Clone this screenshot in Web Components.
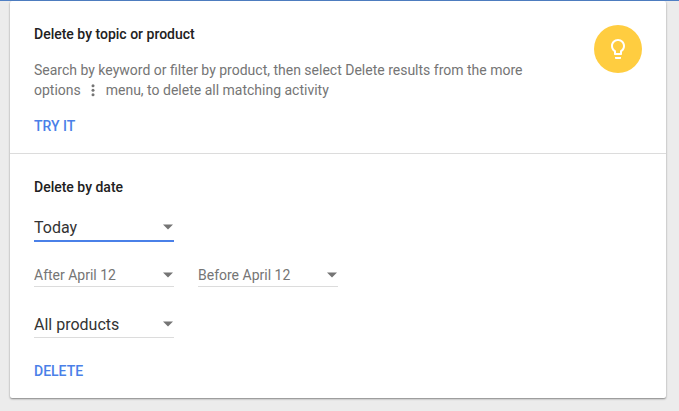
<!DOCTYPE html>
<html lang="en">
<head>
  <meta charset="utf-8">
  <meta name="viewport" content="width=device-width, initial-scale=1">
  <title>Delete activity</title>
  <style>
    body {
      margin: 0;
      background: #ececec;
      color: #212121;
      font: 14px/20px Roboto, sans-serif;
    }
  </style>
</head>
<body>
  <activity-page>
    <activity-section heading="Delete by topic or product">
      <tip-icon slot="icon"></tip-icon>
      <search-hint></search-hint>
      <action-button slot="action">TRY IT</action-button>
    </activity-section>
    <activity-section heading="Delete by date">
      <date-filters></date-filters>
      <action-button slot="action">DELETE</action-button>
    </activity-section>
  </activity-page>

  <script>
    class BaseElement extends HTMLElement {
      constructor() {
        super();
        const shadow = this.attachShadow({ mode: 'open' });
        const template = document.createElement('template');
        template.innerHTML = this.constructor.markup;
        shadow.appendChild(template.content.cloneNode(true));
      }
    }

    class ActivityPage extends BaseElement {
      static markup = `
        <style>
          :host {
            display: block;
            border-top: 1px solid #4f7fc4;
          }
          .card {
            margin: 0 13px 12px 10px;
            background: #fff;
            border-radius: 2px;
            box-shadow: 0 1px 2px rgba(0, 0, 0, .45);
          }
          ::slotted(:not(:first-child)) {
            border-top: 1px solid #dcdcdc;
          }
        </style>
        <main class="card"><slot></slot></main>
      `;
    }

    class ActivitySection extends BaseElement {
      static markup = `
        <style>
          :host {
            display: block;
            padding: 24px 24px 17px;
          }
          .row {
            display: flex;
            align-items: flex-start;
            gap: 24px;
          }
          .text {
            flex: 1;
            min-width: 0;
          }
          h2 {
            margin: 0 0 17px;
            font-size: 14px;
            line-height: 18px;
            font-weight: 500;
          }
          .action {
            margin-top: 16px;
          }
        </style>
        <section>
          <div class="row">
            <div class="text">
              <h2></h2>
              <slot></slot>
              <div class="action"><slot name="action"></slot></div>
            </div>
            <slot name="icon"></slot>
          </div>
        </section>
      `;

      connectedCallback() {
        this.shadowRoot.querySelector('h2').textContent = this.getAttribute('heading');
      }
    }

    class TipIcon extends BaseElement {
      static markup = `
        <style>
          :host {
            display: flex;
            align-items: center;
            justify-content: center;
            width: 48px;
            height: 48px;
            border-radius: 50%;
            background: #ffcd40;
          }
          svg {
            width: 24px;
            height: 24px;
            fill: #fff;
          }
        </style>
        <svg viewBox="0 0 24 24" aria-hidden="true">
          <path d="M9 21c0 .55.45 1 1 1h4c.55 0 1-.45 1-1v-1H9v1zm3-19C8.140 2 5 5.140 5 9c0 2.380 1.190 4.470 3 5.740V17c0 .55.45 1 1 1h6c.55 0 1-.45 1-1v-2.260c1.810-1.270 3-3.360 3-5.740 0-3.860-3.140-7-7-7zm2.850 11.100l-.85.6V16h-4v-2.300l-.85-.6C7.800 12.160 7 10.630 7 9c0-2.760 2.240-5 5-5s5 2.240 5 5c0 1.630-.8 3.160-2.150 4.100z"/>
        </svg>
      `;
    }

    class SearchHint extends BaseElement {
      static markup = `
        <style>
          :host {
            display: block;
            color: #757575;
          }
          p {
            margin: 0;
          }
          svg {
            width: 18px;
            height: 18px;
            vertical-align: middle;
            margin: -4px 0;
            fill: currentColor;
          }
        </style>
        <p>Search by keyword or filter by product, then select Delete results from the more <span>options <svg viewBox="0 0 24 24" aria-hidden="true"><circle cx="12" cy="5" r="2"/><circle cx="12" cy="11" r="2"/><circle cx="12" cy="17" r="2"/></svg> menu, to delete all matching activity</span></p>
      `;
    }

    class ActionButton extends BaseElement {
      static markup = `
        <style>
          :host {
            display: block;
          }
          button {
            display: block;
            padding: 0;
            border: 0;
            background: none;
            color: #4a80e8;
            font: 500 14px/20px Roboto, sans-serif;
            cursor: pointer;
          }
        </style>
        <button type="button"><slot></slot></button>
      `;
    }

    class SelectField extends BaseElement {
      static markup = `
        <style>
          :host {
            display: block;
            width: 140px;
            color: #757575;
            font-size: 14px;
          }
          :host([large]) {
            color: #333;
            font-size: 16px;
          }
          label {
            display: grid;
            align-items: center;
            border-bottom: 1px solid #dcdcdc;
          }
          :host([active]) label {
            border-bottom: 2px solid #4a80e8;
          }
          select, svg {
            grid-area: 1 / 1;
          }
          select {
            appearance: none;
            width: 100%;
            height: 22px;
            padding: 0 16px 0 0;
            border: 0;
            outline: 0;
            background: none;
            color: inherit;
            font: inherit;
          }
          :host([large]) select {
            height: 24px;
          }
          svg {
            justify-self: end;
            width: 12px;
            height: 6px;
            fill: #757575;
            pointer-events: none;
          }
          :host([large]) svg {
            margin-bottom: 2px;
          }
        </style>
        <label>
          <select><option></option></select>
          <svg viewBox="0 0 12 6" aria-hidden="true"><path d="M1 .5h10L6 5.500z"/></svg>
        </label>
      `;

      connectedCallback() {
        this.shadowRoot.querySelector('option').textContent = this.getAttribute('value');
        this.shadowRoot.querySelector('select').setAttribute('aria-label', this.getAttribute('label'));
      }
    }

    class DateFilters extends BaseElement {
      static markup = `
        <style>
          :host {
            display: block;
            padding: 3px 0 7px;
          }
          .range {
            display: flex;
            flex-wrap: wrap;
            gap: 24px;
            margin: 22px 0 26px;
          }
        </style>
        <select-field large active label="Date range" value="Today"></select-field>
        <div class="range">
          <select-field label="After" value="After April 12"></select-field>
          <select-field label="Before" value="Before April 12"></select-field>
        </div>
        <select-field large label="Product" value="All products"></select-field>
      `;
    }

    customElements.define('activity-page', ActivityPage);
    customElements.define('activity-section', ActivitySection);
    customElements.define('tip-icon', TipIcon);
    customElements.define('search-hint', SearchHint);
    customElements.define('action-button', ActionButton);
    customElements.define('select-field', SelectField);
    customElements.define('date-filters', DateFilters);
  </script>
</body>
</html>
